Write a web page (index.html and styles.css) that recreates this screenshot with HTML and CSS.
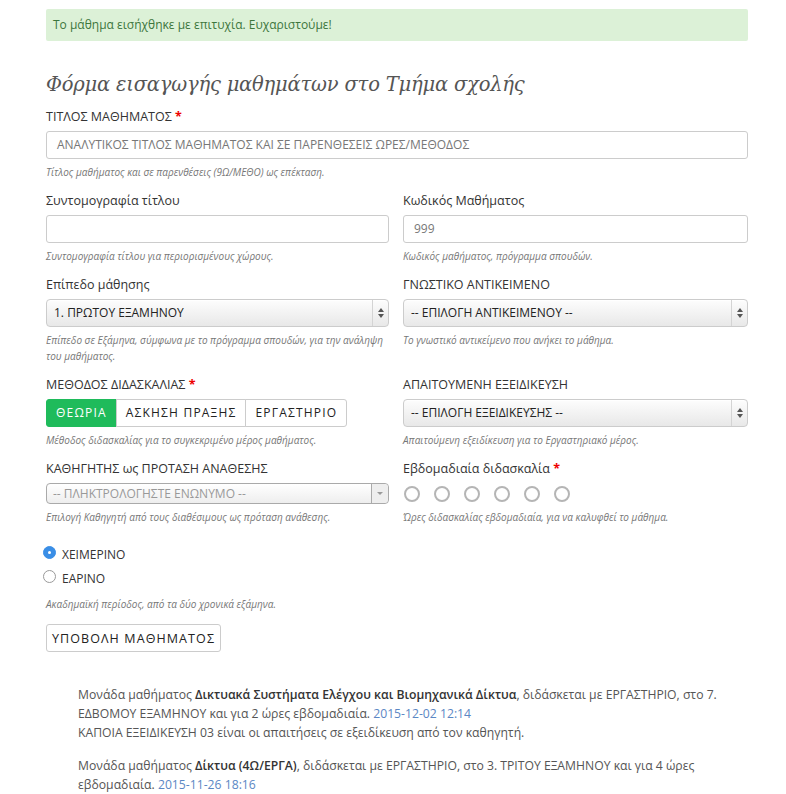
FILE: index.html
```html
<!DOCTYPE html>
<html lang="el">
<head>
<meta charset="utf-8">
<link rel="stylesheet" href="styles.css">
</head>
<body>
<div class="container">
  <div class="alert">Το μάθημα εισήχθηκε με επιτυχία. Ευχαριστούμε!</div>
  <h1 class="title">Φόρμα εισαγωγής μαθημάτων στο Τμήμα σχολής</h1>

  <div class="group">
    <label class="label">ΤΙΤΛΟΣ ΜΑΘΗΜΑΤΟΣ <span class="req">*</span></label>
    <div class="input placeholder">ΑΝΑΛΥΤΙΚΟΣ ΤΙΤΛΟΣ ΜΑΘΗΜΑΤΟΣ ΚΑΙ ΣΕ ΠΑΡΕΝΘΕΣΕΙΣ ΩΡΕΣ/ΜΕΘΟΔΟΣ</div>
    <p class="help">Τίτλος μαθήματος και σε παρενθέσεις (9Ω/ΜΕΘΟ) ως επέκταση.</p>
  </div>

  <div class="row">
    <div class="group">
      <label class="label">Συντομογραφία τίτλου</label>
      <div class="input"></div>
      <p class="help">Συντομογραφία τίτλου για περιορισμένους χώρους.</p>
    </div>
    <div class="group">
      <label class="label">Κωδικός Μαθήματος</label>
      <div class="input placeholder">999</div>
      <p class="help">Κωδικός μαθήματος, πρόγραμμα σπουδών.</p>
    </div>
  </div>

  <div class="row">
    <div class="group">
      <label class="label">Επίπεδο μάθησης</label>
      <div class="select"><span class="sel-text">1. ΠΡΩΤΟΥ ΕΞΑΜΗΝΟΥ</span><span class="sel-arrow"><i class="up"></i><i class="down"></i></span></div>
      <p class="help">Επίπεδο σε Εξάμηνα, σύμφωνα με το πρόγραμμα σπουδών, για την ανάληψη του μαθήματος.</p>
    </div>
    <div class="group">
      <label class="label">ΓΝΩΣΤΙΚΟ ΑΝΤΙΚΕΙΜΕΝΟ</label>
      <div class="select"><span class="sel-text">-- ΕΠΙΛΟΓΗ ΑΝΤΙΚΕΙΜΕΝΟΥ --</span><span class="sel-arrow"><i class="up"></i><i class="down"></i></span></div>
      <p class="help">Το γνωστικό αντικείμενο που ανήκει το μάθημα.</p>
    </div>
  </div>

  <div class="row">
    <div class="group">
      <label class="label">ΜΕΘΟΔΟΣ ΔΙΔΑΣΚΑΛΙΑΣ <span class="req">*</span></label>
      <div class="btn-group">
        <span class="seg active">ΘΕΩΡΙΑ</span><span class="seg">ΑΣΚΗΣΗ ΠΡΑΞΗΣ</span><span class="seg">ΕΡΓΑΣΤΗΡΙΟ</span>
      </div>
      <p class="help">Μέθοδος διδασκαλίας για το συγκεκριμένο μέρος μαθήματος.</p>
    </div>
    <div class="group">
      <label class="label">ΑΠΑΙΤΟΥΜΕΝΗ ΕΞΕΙΔΙΚΕΥΣΗ</label>
      <div class="select"><span class="sel-text">-- ΕΠΙΛΟΓΗ ΕΞΕΙΔΙΚΕΥΣΗΣ --</span><span class="sel-arrow"><i class="up"></i><i class="down"></i></span></div>
      <p class="help">Απαιτούμενη εξειδίκευση για το Εργαστηριακό μέρος.</p>
    </div>
  </div>

  <div class="row">
    <div class="group">
      <label class="label">ΚΑΘΗΓΗΤΗΣ ως ΠΡΟΤΑΣΗ ΑΝΑΘΕΣΗΣ</label>
      <div class="select2"><span class="s2-text">-- ΠΛΗΚΤΡΟΛΟΓΗΣΤΕ ΕΝΩΝΥΜΟ --</span><span class="s2-arrow"><i class="down"></i></span></div>
      <p class="help">Επιλογή Καθηγητή από τους διαθέσιμους ως πρόταση ανάθεσης.</p>
    </div>
    <div class="group">
      <label class="label">Εβδομαδιαία διδασκαλία <span class="req">*</span></label>
      <div class="circles">
        <span class="circle"></span><span class="circle"></span><span class="circle"></span><span class="circle"></span><span class="circle"></span><span class="circle"></span>
      </div>
      <p class="help">Ώρες διδασκαλίας εβδομαδιαία, για να καλυφθεί το μάθημα.</p>
    </div>
  </div>

  <div class="radios">
    <div class="radio-row"><span class="radio checked"></span><span>ΧΕΙΜΕΡΙΝΟ</span></div>
    <div class="radio-row"><span class="radio"></span><span>ΕΑΡΙΝΟ</span></div>
  </div>
  <p class="help period">Ακαδημαϊκή περίοδος, από τα δύο χρονικά εξάμηνα.</p>

  <button class="submit">ΥΠΟΒΟΛΗ ΜΑΘΗΜΑΤΟΣ</button>

  <ul class="entries">
    <li>Μονάδα μαθήματος <b>Δικτυακά Συστήματα Ελέγχου και Βιομηχανικά Δίκτυα</b>, διδάσκεται με ΕΡΓΑΣΤΗΡΙΟ, στο 7. ΕΔΒΟΜΟΥ ΕΞΑΜΗΝΟΥ και για 2 ώρες εβδομαδιαία. <span class="date">2015-12-02 12:14</span><br>ΚΑΠΟΙΑ ΕΞΕΙΔΙΚΕΥΣΗ 03 είναι οι απαιτήσεις σε εξειδίκευση από τον καθηγητή.</li>
    <li>Μονάδα μαθήματος <b>Δίκτυα (4Ω/ΕΡΓΑ)</b>, διδάσκεται με ΕΡΓΑΣΤΗΡΙΟ, στο 3. ΤΡΙΤΟΥ ΕΞΑΜΗΝΟΥ και για 4 ώρες εβδομαδιαία. <span class="date">2015-11-26 18:16</span></li>
  </ul>
</div>
</body>
</html>
```

FILE: styles.css
```css
* { box-sizing: border-box; }
html, body { margin: 0; padding: 0; background: #fff; }
body {
  font-family: "Open Sans", "Noto Sans", sans-serif;
  font-size: 13px;
  color: #333;
}
.container {
  width: 702px;
  margin-left: 46px;
  padding-top: 9px;
}
.alert {
  background: #dcf1d7;
  color: #3c763d;
  height: 32px;
  line-height: 32px;
  padding: 0 7px;
  border-radius: 2px;
  font-size: 12px;
}
.title {
  font-family: "DejaVu Serif", "Liberation Serif", serif;
  font-style: italic;
  font-weight: normal;
  font-size: 19.5px;
  color: #555;
  margin: 27px 0 0 0;
  height: 34px;
  line-height: 34px;
  letter-spacing: -0.2px;
}
.row {
  display: grid;
  grid-template-columns: 343px 345px;
  column-gap: 14px;
}
.group { display: flex; flex-direction: column; }
.label {
  display: block;
  font-size: 12.5px;
  line-height: 18px;
  color: #333;
  margin-top: 6px;
  margin-bottom: 5px;
}
.req { color: #e00; font-weight: bold; }
.input {
  height: 28px;
  border: 1px solid #ccc;
  border-radius: 3px;
  padding: 0 10px;
  line-height: 26px;
  font-size: 12px;
  background: #fff;
}
.placeholder { color: #777; }
.help {
  margin: 5px 0 6px 0;
  font-size: 10px;
  font-style: italic;
  line-height: 16px;
  color: #777;
}
.select {
  height: 28px;
  border: 1px solid #ccc;
  border-radius: 4px;
  background: linear-gradient(#fdfdfd, #e8e8e8);
  display: flex;
  align-items: stretch;
  box-shadow: inset 0 1px 0 #fff;
}
.sel-text {
  flex: 1;
  padding-left: 7px;
  line-height: 26px;
  font-size: 12px;
  color: #222;
}
.sel-arrow {
  width: 16px;
  border-left: 1px solid #d4d4d4;
  display: flex;
  flex-direction: column;
  align-items: center;
  justify-content: center;
  gap: 2px;
}
.up, .down { display: block; width: 0; height: 0; border-left: 3px solid transparent; border-right: 3px solid transparent; }
.up { border-bottom: 4px solid #555; }
.down { border-top: 4px solid #555; }
.btn-group { display: flex; height: 28px; }
.seg {
  border: 1px solid #ccc;
  margin-left: -1px;
  padding: 0 9px;
  line-height: 26px;
  font-size: 12px;
  letter-spacing: 1.2px;
  color: #222;
  background: #fff;
}
.seg:first-child { margin-left: 0; border-radius: 3px 0 0 3px; }
.seg:last-child { border-radius: 0 3px 3px 0; }
.seg.active { background: #1fbb5b; border-color: #1fbb5b; color: #fff; }
.select2 {
  height: 21px;
  border: 1px solid #aaa;
  border-radius: 4px;
  background: linear-gradient(#fff, #eee);
  display: flex;
}
.s2-text { flex: 1; padding-left: 6px; line-height: 19px; font-size: 12px; color: #999; }
.s2-arrow {
  width: 17px;
  border-left: 1px solid #aaa;
  background: #eee;
  border-radius: 0 4px 4px 0;
  display: flex;
  align-items: center;
  justify-content: center;
}
.s2-arrow .down { border-top-color: #999; border-top-width: 3px; border-left-width: 3px; border-right-width: 3px; }
.circles { display: flex; gap: 14px; padding-left: 1px; height: 21px; align-items: center; }
.circle {
  width: 16px; height: 16px;
  border: 2px solid #b5b5b5;
  border-radius: 50%;
}
.radios { margin-top: 11px; }
.radio-row {
  display: flex;
  align-items: center;
  gap: 6px;
  height: 24px;
  margin-left: -3px;
  font-size: 12px;
  color: #333;
}
.radio {
  width: 13px; height: 13px;
  border-radius: 50%;
  border: 1px solid #9a9a9a;
  background: #fff;
  position: relative;
  top: -2px;
}
.radio.checked { background: #3a8ee6; border-color: #3a8ee6; }
.radio.checked::after {
  content: ""; position: absolute; left: 4px; top: 4px;
  width: 3px; height: 3px; border-radius: 50%; background: #fff;
}
.help.period { margin-top: 6px; }
.submit {
  display: block;
  height: 28px;
  width: 175px;
  padding: 0;
  border: 1px solid #ccc;
  border-radius: 3px;
  background: #fff;
  font-family: "Open Sans", sans-serif;
  font-size: 12.5px;
  letter-spacing: 1.1px;
  color: #222;
  margin-top: 12px;
}
.entries {
  list-style: none;
  margin: 33px 0 0 0;
  padding: 0 0 0 32px;
  font-size: 12.2px;
  line-height: 19px;
  color: #555;
}
.entries li { margin-bottom: 14px; line-height: 19px; }
.entries b { font-weight: 600; color: #333; }
.date { color: #5b87c4; }
```
